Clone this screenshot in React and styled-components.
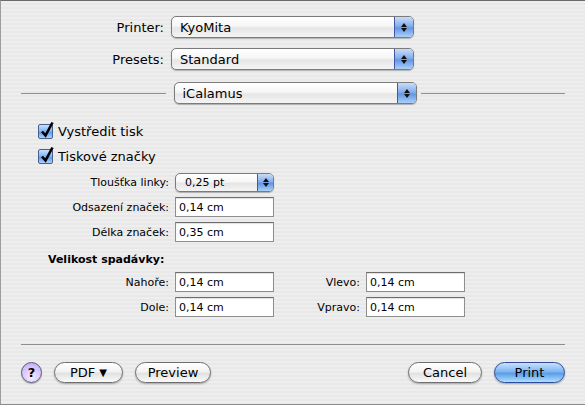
import React from 'react'
import styled, { createGlobalStyle } from 'styled-components'

const Global = createGlobalStyle`
  html, body { margin: 0; padding: 0; background: #ececec; }
  * { box-sizing: border-box; }
`

const Sheet = styled.div`
  width: 585px;
  height: 405px;
  border-top: 1px solid #6b6b6b;
  border-left: 1px solid #9c9c9c;
  border-bottom: 1px solid #8a8a8a;
  background: repeating-linear-gradient(to bottom, #eeeeee 0px, #eeeeee 2px, #e8e8e8 2px, #e8e8e8 4px);
  font-family: "DejaVu Sans", "Lucida Grande", sans-serif;
  color: #000;
  display: flex;
  flex-direction: column;
`

const Top = styled.div`
  padding-top: 15px;
  display: flex;
  flex-direction: column;
  gap: 10px;
`

const PopupRow = styled.div`
  display: grid;
  grid-template-columns: 163px 243px;
  column-gap: 7px;
  align-items: center;
  font-size: 13px;
`

const Label = styled.span`
  text-align: right;
  font-size: ${p => p.$small ? '11px' : '13px'};
  white-space: nowrap;
`

const Popup = styled.div`
  position: relative;
  height: ${p => p.$small ? '19px' : '22px'};
  width: ${p => p.$w || 243}px;
  border: 1px solid #7b7b7b;
  border-radius: 5px;
  background: linear-gradient(to bottom, #ffffff 0%, #f6f6f6 45%, #e6e6e6 55%, #f4f4f4 100%);
  box-shadow: 0 1px 1px rgba(0,0,0,0.25);
  display: flex;
  align-items: center;
  padding-left: ${p => p.$small ? '9px' : '8px'};
  font-size: ${p => p.$small ? '11px' : '13px'};
  overflow: hidden;
`

const Arrows = styled.div`
  position: absolute;
  right: 0;
  top: 0;
  bottom: 0;
  width: ${p => p.$small ? '16px' : '19px'};
  border-left: 1px solid #3f58a8;
  background: linear-gradient(to bottom, #c8dcfa 0%, #86aeea 45%, #6396e2 55%, #aad0fb 100%);
  display: flex;
  flex-direction: column;
  align-items: center;
  justify-content: center;
  gap: 1px;
`

const Tri = styled.span`
  width: 0;
  height: 0;
  border-left: 3px solid transparent;
  border-right: 3px solid transparent;
  ${p => p.$up ? 'border-bottom: 4px solid #111;' : 'border-top: 4px solid #111;'}
`

const PopupBox = ({ children, small, w }) => (
  <Popup $small={small} $w={w}>
    {children}
    <Arrows $small={small}><Tri $up /><Tri /></Arrows>
  </Popup>
)

const DividerRow = styled.div`
  display: flex;
  align-items: center;
  padding: 0 20px 0 20px;
  margin-top: 2px;
`

const Line = styled.div`
  height: 1px;
  background: #8d8d8d;
  flex: 1;
  margin: ${p => p.$m || '0'};
`

const Options = styled.div`
  padding-left: 37px;
  margin-top: 19px;
  display: flex;
  flex-direction: column;
`

const Check = styled.label`
  display: flex;
  align-items: center;
  gap: 5px;
  font-size: 13px;
  height: 16px;
  margin-bottom: ${p => p.$mb || 0}px;
`

const Box = styled.span`
  position: relative;
  width: 15px;
  height: 15px;
  border: 1px solid #4a5f8c;
  border-radius: 2px;
  background: linear-gradient(to bottom, #c6e0ff 0%, #7fb2f0 50%, #5d9ae8 55%, #a9d3ff 100%);
`

const Tick = styled.svg`
  position: absolute;
  left: 1px;
  top: -4px;
`

const FieldGrid = styled.div`
  margin-top: 9px;
  display: grid;
  grid-template-columns: 131px 100px 79px 100px;
  column-gap: 6px;
  row-gap: 5px;
  align-items: center;
`

const Field = styled.div`
  height: 20px;
  width: ${p => p.$w || 99}px;
  border: 1px solid #8e8e8e;
  border-top-color: #6c6c6c;
  background: #fff;
  box-shadow: inset 0 1px 1px rgba(0,0,0,0.12);
  font-size: 11px;
  display: flex;
  align-items: center;
  padding-left: 3px;
`

const Heading = styled.div`
  grid-column: 1 / -1;
  margin-left: 10px;
  font-size: 11px;
  font-weight: bold;
  margin-top: 6px;
  margin-bottom: 1px;
`

const Separator = styled.div`
  height: 1px;
  background: #8d8d8d;
  margin: 27px 20px 0 20px;
`

const Footer = styled.div`
  display: flex;
  align-items: center;
  padding: 0 20px;
  margin-top: 17px;
  gap: 12px;
`

const Help = styled.div`
  width: 21px;
  height: 21px;
  border-radius: 50%;
  border: 1px solid #5b5b73;
  background: radial-gradient(circle at 50% 75%, #f4ecff 0%, #d5c2ff 60%, #b9a0f2 100%);
  display: flex;
  align-items: center;
  justify-content: center;
  font-size: 13px;
  font-weight: bold;
  box-shadow: 0 1px 1px rgba(0,0,0,0.3);
`

const Pill = styled.div`
  height: 21px;
  width: ${p => p.$w}px;
  border-radius: 11px;
  border: 1px solid ${p => p.$primary ? '#2f4a9a' : '#6e6e6e'};
  background: ${p => p.$primary
    ? 'linear-gradient(to bottom, #c9e1ff 0%, #7fb5f2 45%, #5d9de9 55%, #aee0ff 100%)'
    : 'linear-gradient(to bottom, #ffffff 0%, #f3f3f3 45%, #e2e2e2 55%, #fafafa 100%)'};
  box-shadow: 0 1px 2px rgba(0,0,0,0.3);
  display: flex;
  align-items: center;
  justify-content: center;
  font-size: 13px;
  gap: 4px;
`

const Caret = styled.span`
  font-size: 10px;
`

const Spacer = styled.div`
  flex: 1;
`

const CheckMark = () => (
  <Box>
    <Tick width="14" height="18" viewBox="0 0 14 18">
      <path d="M2 10.5 L5.5 14.5 L12.5 1.5" fill="none" stroke="#000" strokeWidth="2.6" />
    </Tick>
  </Box>
)

export default function App() {
  return (
    <>
      <Global />
      <Sheet>
        <Top>
          <PopupRow>
            <Label>Printer:</Label>
            <PopupBox>KyoMita</PopupBox>
          </PopupRow>
          <PopupRow>
            <Label>Presets:</Label>
            <PopupBox>Standard</PopupBox>
          </PopupRow>
          <DividerRow>
            <Line $m="0 8px 0 0" />
            <PopupBox>iCalamus</PopupBox>
            <Line $m="0 0 0 4px" />
          </DividerRow>
        </Top>

        <Options>
          <Check $mb={9}>
            <CheckMark />
            Vystředit tisk
          </Check>
          <Check>
            <CheckMark />
            Tiskové značky
          </Check>

          <FieldGrid>
            <Label $small>Tloušťka linky:</Label>
            <PopupBox small w={99}>0,25 pt</PopupBox>
            <span /><span />
            <Label $small>Odsazení značek:</Label>
            <Field>0,14 cm</Field>
            <span /><span />
            <Label $small>Délka značek:</Label>
            <Field>0,35 cm</Field>
            <span /><span />
            <Heading>Velikost spadávky:</Heading>
            <Label $small>Nahoře:</Label>
            <Field>0,14 cm</Field>
            <Label $small>Vlevo:</Label>
            <Field>0,14 cm</Field>
            <Label $small>Dole:</Label>
            <Field>0,14 cm</Field>
            <Label $small>Vpravo:</Label>
            <Field>0,14 cm</Field>
          </FieldGrid>
        </Options>

        <Separator />

        <Footer>
          <Help>?</Help>
          <Pill $w={69}>PDF <Caret>▼</Caret></Pill>
          <Pill $w={76}>Preview</Pill>
          <Spacer />
          <Pill $w={74}>Cancel</Pill>
          <Pill $w={71} $primary>Print</Pill>
        </Footer>
      </Sheet>
    </>
  )
}
